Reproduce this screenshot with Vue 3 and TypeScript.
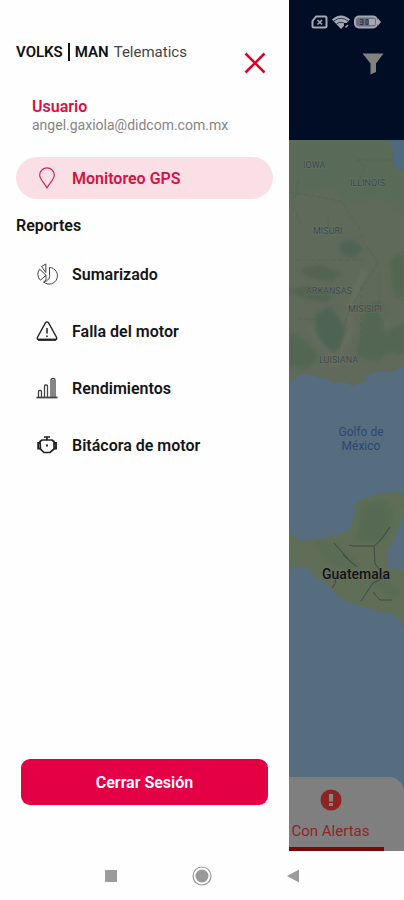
<script setup lang="ts">
import { ref } from 'vue'

type IconName = 'chart' | 'warning' | 'bars' | 'engine'
interface Report {
  label: string
  icon: IconName
}

const reports: Report[] = [
  { label: 'Sumarizado', icon: 'chart' },
  { label: 'Falla del motor', icon: 'warning' },
  { label: 'Rendimientos', icon: 'bars' },
  { label: 'Bitácora de motor', icon: 'engine' },
]

const active = ref('Monitoreo GPS')
</script>

<template>
  <div class="screen">
    <div class="app">
      <aside class="drawer">
        <header class="brand">
          <h1 class="brand-name"><b>VOLKS</b><i class="divider"></i><b>MAN</b><span>Telematics</span></h1>
          <button class="close" type="button" aria-label="Cerrar menú">
            <svg viewBox="0 0 22 22" width="22" height="22"><path d="M1.5 1.5 20.5 20.5M20.5 1.5 1.5 20.5" fill="none" stroke="#d8052f" stroke-width="2.6" /></svg>
          </button>
        </header>

        <section class="user">
          <strong>Usuario</strong>
          <span>angel.gaxiola@didcom.com.mx</span>
        </section>

        <nav class="menu">
          <a href="#gps" class="item" :class="{ active: active === 'Monitoreo GPS' }" @click.prevent="active = 'Monitoreo GPS'">
            <svg class="icon" viewBox="0 0 22 22">
              <path d="M11 21C9.600 17 3.700 12.500 3.700 8.200A7.300 7.300 0 0 1 18.300 8.200C18.300 12.500 12.400 17 11 21Z" fill="none" stroke="#c62850" stroke-width="1.200" stroke-linejoin="round" />
            </svg>
            <span>Monitoreo GPS</span>
          </a>
          <h2 class="group">Reportes</h2>
          <a
            v-for="report in reports"
            :key="report.label"
            href="#reporte"
            class="item"
            :class="{ active: active === report.label }"
            @click.prevent="active = report.label"
          >
            <svg v-if="report.icon === 'chart'" class="icon thin" viewBox="0 0 22 22">
              <path d="M13.500 4.500A8.300 8.300 0 1 1 8 19.300C12 17.500 14.500 15 13.500 11Z" />
              <path d="M3.600 6.200 10 12.200 4.500 17.200A8 8 0 0 1 3.600 6.200Z" />
              <path d="M5.500 3.500 9.800 1V9.500ZM10 12.200V17L7 19.500" />
            </svg>
            <svg v-else-if="report.icon === 'warning'" class="icon" viewBox="0 0 22 22">
              <path d="M9.400 3Q11 .8 12.600 3L20.500 17.200Q21.400 19.800 19 20H3Q.6 19.800 1.500 17.200Z" />
              <path d="M2 19.600H20" stroke-width="2" />
              <path d="M11 8V13.500M11 15.500V17" stroke-width="1.500" />
            </svg>
            <svg v-else-if="report.icon === 'bars'" class="icon thin" viewBox="0 0 22 22">
              <path d="M2.500 20V14.500Q2.500 13.500 3.500 13.500H4.500Q5.500 13.500 5.500 14.500V20M8.500 20V9Q8.500 8 9.500 8H10.500Q11.500 8 11.500 9V20M15 20V3Q15 1.500 17 1.500T19 3V20M17 3V20" stroke-width="1.300" />
              <path d="M.5 20.500H21.500" stroke-width="1.800" />
            </svg>
            <svg v-else class="icon" viewBox="0 0 22 22">
              <path d="M8 3H14M11 3V6M4 7.500 6 6H16L18 7.500V15L14 18.500H8L4.500 15Z" stroke-width="1.700" />
              <path d="M4 9H2.200V14.500H4.500M18 9H20V14.500H18" stroke-width="1.900" />
              <path d="M10 11.500H12" stroke-width="2" />
            </svg>
            <span>{{ report.label }}</span>
          </a>
        </nav>

        <button class="logout" type="button">Cerrar Sesión</button>
      </aside>

      <main class="behind">
        <header class="topbar">
          <div class="status">
            <svg viewBox="0 0 17 14" width="17" height="14">
              <path d="M5 1.500H14Q15.500 1.500 15.500 3V11Q15.500 12.500 14 12.500H3Q1.500 12.500 1.500 11V6Z" fill="none" stroke="#a3a8b2" stroke-width="2" stroke-linejoin="round" />
              <path d="M6.500 5 11 9.500M11 5 6.500 9.500" stroke="#a3a8b2" stroke-width="1.600" />
            </svg>
            <svg viewBox="0 0 18 14" width="18" height="14">
              <path d="M0 4.500Q9-3.500 18 4.500L9 14Z" fill="#a3a8b2" />
              <path d="M2 6Q9 .5 16 6M4.500 9Q9 5.500 13.500 9" fill="none" stroke="#000d25" stroke-width=".7" />
              <path d="M12 8H18V14H12Z" fill="#000d25" /><path d="M13.500 12.500 16 10" stroke="#a3a8b2" stroke-width="1.500" />
            </svg>
            <svg viewBox="0 0 27 14" width="27" height="14">
              <rect x="1" y="1.500" width="22" height="11" rx="4" fill="#686e80" stroke="#a3a8b2" stroke-width="2" />
              <rect x="15" y="4" width="6" height="6" rx="1" fill="#a3a8b2" />
              <path d="M24 3.500 27 7 24 10.500Z" fill="#a3a8b2" />
              <path d="M6 4.500H9V9.500H6M9 7H6M12 4.500V9.500H14V4.500Z" fill="none" stroke="#303649" stroke-width="1" />
            </svg>
          </div>
          <button class="filter" type="button" aria-label="Filtrar">
            <svg viewBox="0 0 22 22" width="22" height="22"><path d="M.5.5H21.500L14 10.500V19L8.500 21.500V10.500Z" fill="#818180" /></svg>
          </button>
        </header>

        <div class="map-area">
          <svg class="map" viewBox="0 0 115 711" preserveAspectRatio="xMidYMid slice" role="img" aria-label="Mapa">
            <defs>
              <filter id="soft" x="-10%" y="-10%" width="120%" height="120%"><feGaussianBlur stdDeviation="2" /></filter>
              <clipPath id="north"><path d="M0 0H115V227L109 229 101 233 93 231 85 233 76 236 80 241 72 243 63 246 58 243 52 242 46 244 38 239 28 237 18 234 10 235 5 240 0 242Z" /></clipPath>
            </defs>
            <rect width="115" height="711" fill="#566d80" />
            <g clip-path="url(#north)">
              <rect width="115" height="250" fill="#606a5b" />
              <g filter="url(#soft)">
                <path d="M0 0H100L115 30V75L90 60 60 64 40 48 0 58Z" fill="#5a6a59" />
                <path d="M50 103 62 99 74 108 66 118 52 115Z" fill="#4f6353" />
                <path d="M10 130 30 124 54 134 42 142 22 138ZM0 150 18 146 48 150 38 162 12 158Z" fill="#536451" />
                <path d="M26 174 42 165 50 178 56 190 50 214 36 207 27 194Z" fill="#506452" />
                <path d="M76 167 92 160 98 178 92 192 115 184V216L98 212 88 222 66 216 71 196Z" fill="#526652" />
                <path d="M0 192 14 198 30 216 18 229 0 226Z" fill="#536651" />
                <path d="M100 120 115 112V160L105 155Z" fill="#536651" />
                <path d="M75 130 60 170 62 190 48 218 44 225" fill="none" stroke="#687161" stroke-width="4" />
                <path d="M20 187 34 207 50 227M91 168 99 190" fill="none" stroke="#687161" stroke-width="2" />
              </g>
              <path d="M0 52 30 57 54 62 61 75 70 87 75 103 89 122 82 134 72 150 61 169 55 186 49 215M67 20H115M67 46 76 28 64 15M39 77V97M7 120H74M8 179H48M72 147V213M90 132V164M10 40 3 66 12 84" fill="none" stroke="#56614f" stroke-width="1" stroke-dasharray="5 2" opacity=".7" />
              <path d="M101 0 104 10 105 25 109 30H115V0Z" fill="#4e6980" />
            </g>
            <g fill="#606e57">
              <path d="M0 393 12 401 30 399 48 395 60 390 66 374 67 363 69 361 88 354 108 352 115 355V365L112 383 104 402 98 409 99 428 115 430V486L105 474 94 472 80 469 61 463 48 455 36 442 23 435 18 427 8 427 0 426Z" />
            </g>
            <g filter="url(#soft)" fill="#566a53">
              <path d="M72 365 96 359 105 374 96 402 67 402Z" />
              <path d="M24 401 48 403 60 414 72 426 61 431 39 423ZM66 435 89 438 112 449 108 459 91 450Z" opacity=".6" />
            </g>
            <path d="M54 415 68 427M60 405 64 406H85L91 401 101 387M85 406 86 424 97 437 84 443 80 449 72 461M84 452 91 460 103 460M43 448 47 442 44 436M45 403 60 420" fill="none" stroke="#34423a" stroke-width="1" opacity=".8" />
            <g class="state">
              <text x="14" y="28">IOWA</text>
              <text x="61" y="46">ILLINOIS</text>
              <text x="24" y="94">MISURI</text>
              <text x="17" y="154">ARKANSAS</text>
              <text x="59" y="172">MISISIPI</text>
              <text x="30" y="223">LUISIANA</text>
            </g>
            <g class="sea"><text x="72" y="296">Golfo de</text><text x="72" y="310">México</text></g>
            <text class="country" x="67" y="439">Guatemala</text>
          </svg>
          <div class="sheet">
            <a href="#alertas" class="tab">
              <svg viewBox="0 0 22 22" width="22" height="22">
                <circle cx="11" cy="11" r="10.500" fill="#8c2420" />
                <path d="M9 5H13V12.500H9ZM9 14H13V17H9Z" fill="#858585" />
              </svg>
              <span>Con Alertas</span>
            </a>
          </div>
        </div>
      </main>
    </div>

    <footer class="system">
      <button type="button" aria-label="Recientes"><svg viewBox="0 0 20 20" width="20" height="20"><path d="M4 4H16V16H4Z" fill="#9b9b9b" /></svg></button>
      <button type="button" aria-label="Inicio"><svg viewBox="0 0 20 20" width="20" height="20"><circle cx="10" cy="10" r="9" fill="none" stroke="#999" stroke-width="1.200" /><circle cx="10" cy="10" r="6.500" fill="#999" /></svg></button>
      <button type="button" aria-label="Atrás"><svg viewBox="0 0 20 20" width="20" height="20"><path d="M4 10 16 3.500V16.500Z" fill="#9b9b9b" /></svg></button>
    </footer>
  </div>
</template>

<style>
body {
  margin: 0;
  background: #fefefe;
}
</style>

<style scoped>
* {
  box-sizing: border-box;
}
.screen {
  min-height: 100vh;
  display: flex;
  flex-direction: column;
  font-family: Roboto, "Liberation Sans", sans-serif;
  font-size: 16px;
  color: #151515;
  background: #fefefe;
}
.app {
  flex: 1;
  display: grid;
  grid-template-columns: minmax(0, 289fr) minmax(0, 115fr);
}
button {
  font: inherit;
  border: 0;
  padding: 0;
  background: none;
  cursor: pointer;
}
a {
  color: inherit;
  text-decoration: none;
}
svg {
  display: block;
}
.drawer {
  display: flex;
  flex-direction: column;
  padding: 40px 16px 46px;
}
.brand {
  display: flex;
  justify-content: space-between;
  align-items: flex-start;
  padding-right: 7px;
}
.brand-name {
  display: flex;
  align-items: center;
  margin: 0;
  height: 24px;
  font-size: 15px;
  font-weight: 400;
  color: #444;
}
.brand-name b {
  font-weight: 600;
  color: #111;
}
.brand-name span {
  margin-left: 5px;
}
.divider {
  width: 2px;
  height: 18px;
  margin: 0 5px;
  background: #111;
}
.close {
  margin-top: 12px;
}
.user {
  display: flex;
  flex-direction: column;
  margin-top: 24px;
  padding-left: 16px;
  line-height: 18px;
  font-size: 14px;
  color: #858585;
}
.user strong {
  font-size: 16px;
  font-weight: 600;
  color: #d21243;
}
.menu {
  display: flex;
  flex-direction: column;
  gap: 15px;
  margin-top: 23px;
}
.item {
  display: flex;
  align-items: center;
  gap: 14px;
  height: 42px;
  padding: 0 20px;
  border-radius: 21px;
  font-weight: 600;
}
.item.active {
  color: #d21243;
  background: #fbdfe6;
}
.icon {
  flex: none;
  width: 22px;
  height: 22px;
  fill: none;
  stroke: #222;
  stroke-width: 1.4;
}
.thin {
  stroke: #444;
  stroke-width: 1;
}
.group {
  margin: 0;
  line-height: 24px;
  font-size: 16px;
  font-weight: 600;
}
.logout {
  height: 46px;
  margin: auto 5px 0;
  border-radius: 9px;
  font-weight: 600;
  color: #fff;
  background: #e30045;
}
.behind {
  display: flex;
  flex-direction: column;
}
.topbar {
  display: flex;
  flex-direction: column;
  align-items: flex-end;
  gap: 24px;
  height: 140px;
  padding: 15px 20px;
  background: #000d25;
}
.status {
  display: flex;
  gap: 4px;
  margin-right: 3px;
}
.map-area {
  position: relative;
  flex: 1;
  overflow: hidden;
}
.map {
  position: absolute;
  width: 100%;
  height: 100%;
}
.map text {
  stroke: #69756a;
  stroke-width: 1;
  paint-order: stroke;
}
.state {
  font-size: 9px;
  fill: #3c4846;
}
.map .sea text {
  font-size: 12px;
  text-anchor: middle;
  fill: #2c4770;
  stroke: none;
}
.country {
  font-size: 14px;
  font-weight: 500;
  text-anchor: middle;
  fill: #111;
}
.sheet {
  position: absolute;
  right: 0;
  bottom: 0;
  left: 0;
  padding-right: 20px;
  border-radius: 0 15px 0 0;
  background: #7f7f7f;
}
.tab {
  display: flex;
  flex-direction: column;
  align-items: center;
  gap: 12px;
  padding: 12px 12px 7px 0;
  border-bottom: 4px solid #7d0608;
  line-height: 17px;
  font-size: 15px;
  color: #8f2527;
  white-space: nowrap;
}
.system {
  display: flex;
  justify-content: space-between;
  align-items: center;
  height: 49px;
  padding: 0 25%;
}
</style>
